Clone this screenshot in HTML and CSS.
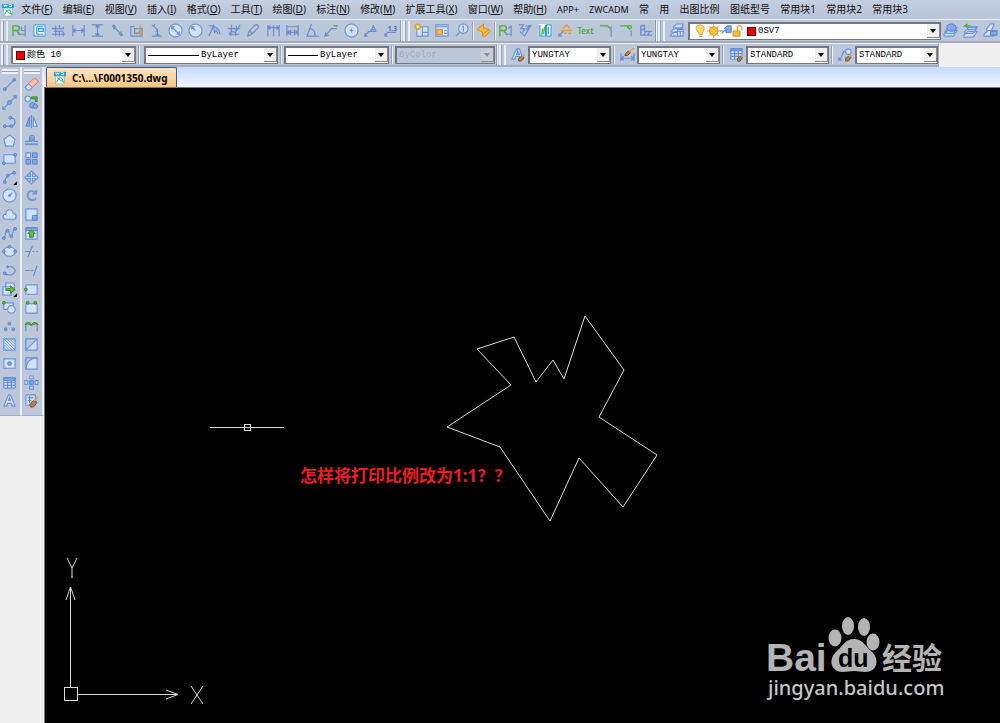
FILE: index.html
```html
<!DOCTYPE html>
<html lang="zh-CN">
<head>
<meta charset="utf-8">
<title>F0001350.dwg</title>
<link rel="stylesheet" href="styles.css">
</head>
<body>
<div class="app">
<nav class="menu" aria-label="主菜单">
<div class="items">
<svg class="logo" viewBox="0 0 16 16"><path class="paper" d="M3 5h10v9l-2 1H3z"/><path class="cyan" d="M1 1h14v5H1z"/><path class="whiteline" d="M3 2l1 2 1-2 1 2 1-2M9 2h3v2H9"/><path class="greenline" d="M4 13l3-5h3l2 5M5 8l7 5"/></svg>
<button>文件(<u>F</u>)</button><button>编辑(<u>E</u>)</button><button>视图(<u>V</u>)</button><button>插入(<u>I</u>)</button><button>格式(<u>O</u>)</button><button>工具(<u>T</u>)</button><button>绘图(<u>D</u>)</button><button>标注(<u>N</u>)</button><button>修改(<u>M</u>)</button><button>扩展工具(<u>X</u>)</button><button>窗口(<u>W</u>)</button><button>帮助(<u>H</u>)</button><button class="latin">APP+</button><button class="latin">ZWCADM</button><button>常</button><button>用</button><button>出图比例</button><button>图纸型号</button><button>常用块1</button><button>常用块2</button><button>常用块3</button>
</div>
</nav>

<div class="bar">
<i class="grip"></i>
<div class="tools dims">
<button aria-label="关联标注"><svg viewBox="0 0 16 16"><path class="g" d="M1 14V3h4c4 0 4 5 0 5H1M5 8l4 5"/><path class="s" d="M6 12h8V2M10 4v4h4M14 2v12"/></svg></button>
<button aria-label="布局"><svg viewBox="0 0 16 16"><path class="w" d="M1 1h14v14H1z"/><path class="c" d="M2 2h12v12H2zM5 4v8M5 4h7M7 6h5v3H7zM5 12h7"/></svg></button>
<button aria-label="快速标注"><svg viewBox="0 0 16 16"><path class="s" d="M1 6h13M5 3v6M3 9h10M9 2v5M13 4v3M1 12h14M5 9v5M9 9v5M13 9v5"/></svg></button>
<button aria-label="线性标注"><svg viewBox="0 0 16 16"><path class="s" d="M2 2v12M14 2v12M2 8h12M5 6L2 8l3 2M11 6l3 2-3 2"/></svg></button>
<button aria-label="竖直标注"><svg viewBox="0 0 16 16"><path class="s" d="M2 2h12M2 14h12M8 2v12M6 5l2-3 2 3M6 11l2 3 2-3"/></svg></button>
<button aria-label="对齐标注"><svg viewBox="0 0 16 16"><path class="s" d="M2 4l3-2M11 14l3-2M4 4l8 8M4 7V4h3M9 12h3V9"/></svg></button>
<button aria-label="坐标标注"><svg viewBox="0 0 16 16"><path class="s" d="M2 3v11h12V6H6v5h5V8M2 4h4"/><path class="o" d="M12 2v11M9 10h6"/></svg></button>
<button aria-label="折弯标注"><svg viewBox="0 0 16 16"><path class="s" d="M3 2l6 5-2 3M9 7v7M3 14h11M5 4l1-3M7 12l2 2 2-2"/></svg></button>
<button aria-label="直径"><svg viewBox="0 0 16 16"><circle class="f" cx="8" cy="8" r="7"/><path class="s" d="M4 4l8 8M4 7V4h3M9 12h3V9"/></svg></button>
<button aria-label="半径"><svg viewBox="0 0 16 16"><circle class="f" cx="8" cy="8" r="7"/><path class="s" d="M8 8L4 4M4 7V4h3"/></svg></button>
<button aria-label="折弯半径"><svg viewBox="0 0 16 16"><path class="s" d="M2 14L7 3l1 7 2-2 2 4M2 3c6-1 11 3 12 9"/></svg></button>
<button aria-label="弧长"><svg viewBox="0 0 16 16"><path class="s" d="M1 6h13M2 12h11M5 2L4 14M10 3l-1 11M2 12l3-3 4 1 5-8"/></svg></button>
<button aria-label="编辑标注"><svg viewBox="0 0 16 16"><path class="s" d="M2 14l1-5 7-7c2-1 4 1 3 3l-7 7zM3 9c2 0 3 1 3 3"/></svg></button>
<button aria-label="基线标注"><svg viewBox="0 0 16 16"><path class="s" d="M2 2v12M8 2v12M14 2v12M2 5h12M5 3L2 5l3 2M11 3l3 2-3 2"/></svg></button>
<button aria-label="连续标注"><svg viewBox="0 0 16 16"><path class="s" d="M2 2v12M14 2v12M2 4h12M2 10h12M6 7v6M10 7v6M5 12l-3-2 3-2M11 8l3 2-3 2"/></svg></button>
<button aria-label="角度标注"><svg viewBox="0 0 16 16"><path class="s" d="M7 1L2 14h13M5 6c4 0 6 4 6 8"/></svg></button>
<button aria-label="引线"><svg viewBox="0 0 16 16"><path class="s" d="M1 14l7-8h6M2 10l-1 4 4-1"/><path class="g" d="M10 3h5"/></svg></button>
<button aria-label="圆心标记"><svg viewBox="0 0 16 16"><circle class="f" cx="8" cy="8" r="7"/><path class="s" d="M8 6v4M6 8h4"/></svg></button>
<button aria-label="公差"><svg viewBox="0 0 16 16"><path class="s" d="M2 14l4-5h8M2 11v3h3M8 9l3-6 3 6M9 7h4"/></svg></button>
<button aria-label="标注文字"><svg viewBox="0 0 16 16"><path class="s" d="M2 14l3-4h9M2 11v3h3"/><text class="num" x="5" y="8">1.3</text></svg></button>
</div>
<i class="edge"></i><i class="grip"></i>
<div class="tools leaders">
<button aria-label="新建视图"><svg viewBox="0 0 16 16"><path class="f" d="M3 4h12v10H3zM9 4v10M9 10h6"/><circle class="amber" cx="4" cy="4" r="3"/><circle class="w" cx="4" cy="4" r="1"/></svg></button>
<button aria-label="视图管理"><svg viewBox="0 0 16 16"><path class="f" d="M2 2h13v12H2z"/><path class="s" d="M2 4h12M11 8h3M11 11h3"/><path class="amber" d="M3 7h6v5H3z"/></svg></button>
<button aria-label="查找"><svg viewBox="0 0 16 16"><circle class="f" cx="10" cy="6" r="5"/><path class="s" d="M6 10l-4 4M10 3v6M9 4l1-1"/></svg></button>
<i class="sep"></i>
<button aria-label="编辑"><svg viewBox="0 0 16 16"><path class="amber" d="M1 7l7-6v4l6 2-7 7v-4z"/><path class="amber" d="M7 13l6-6 2 2-6 6z"/></svg></button>
<i class="sep"></i>
<button aria-label="粗糙度"><svg viewBox="0 0 16 16"><path class="g" d="M2 14V3h4c4 0 4 5 0 5H2M6 8l4 5"/><path class="s" d="M8 12h6V3M11 6l3-3M14 3v11"/></svg></button>
<button aria-label="形位公差"><svg viewBox="0 0 16 16"><path class="s" d="M1 2h5L3 6h4l-2 4M2 9l5 5 7-12M8 3h4l-3 4h3"/></svg></button>
<button aria-label="对照"><svg viewBox="0 0 16 16"><path class="w" d="M1 1h14v14H1z"/><path class="c" d="M2 2v12h6V2M9 2h5v12H9zM11 4v8"/><path class="g" d="M4 13l1-7M6 12l1-8"/></svg></button>
<button aria-label="焊接符号"><svg viewBox="0 0 16 16"><path class="s" d="M1 14l5-6M1 11v3h3"/><path class="o" d="M3 8h12M5 6l4-4 4 4M7 11h2M11 11h3"/></svg></button>
<button class="texttool">Text</button>
<button aria-label="倒角"><svg viewBox="0 0 16 16"><path class="g" d="M2 3h8l4 4"/><path class="s" d="M14 3v12"/></svg></button>
<button aria-label="圆角"><svg viewBox="0 0 16 16"><path class="g" d="M2 3h7M9 3l4 4M10 3h4v3"/><path class="s" d="M14 8v6"/></svg></button>
<button aria-label="孔标注"><svg viewBox="0 0 16 16"><path class="s" d="M3 2v11h12M7 2v7h8M3 4l4-2M3 8l4-2M6 13l3-4M10 13l3-4"/></svg></button>
</div>
<i class="edge"></i><i class="grip"></i>
<div class="tools one"><button aria-label="图层管理"><svg viewBox="0 0 16 16"><path class="f" d="M1 12l5-3h8l-3 5H1zM2 8l4-3h8l-3 5H2zM4 4l3-3h7l-2 5H4z"/><path class="f" d="M8 7h6v7H8zM8 9h6M11 9v5"/></svg></button></div>
<label class="combo layer"><svg class="states" viewBox="0 0 54 16"><path class="bulb" d="M4 12V10C-2 4 2 1 5 1s8 3 3 9v2z"/><path class="s" d="M4 14h4"/><path class="ray" d="M21 0v16M13 8h16M15 2l12 12M15 14L27 2"/><circle class="amber" cx="21" cy="8" r="5"/><path class="deep" d="M33 5l4-3h4v8h-6V6z"/><path class="s" d="M28 8h7M30 11l4-4"/><path class="amber" d="M43 8h8v6h-8z"/><path class="o" d="M48 8V4c0-3 5-3 5 0v3"/></svg><i class="red"></i><select aria-label="图层"><option>0SV7</option></select><span class="arrow"></span></label>
<div class="tools last">
<button aria-label="图层置为当前"><svg viewBox="0 0 16 16"><path class="f" d="M1 12l4-4h10l-4 6H1zM2 9l4-4h9l-4 6H2z"/><ellipse class="deep" cx="9" cy="5" rx="5" ry="4"/></svg></button>
<button aria-label="上一个图层"><svg viewBox="0 0 16 16"><path class="f" d="M1 13l4-4h10l-4 6H1zM2 9l4-4h9l-4 6H2zM5 4h10l-2 3H5z"/><path class="g" d="M8 3H2l3-2M2 3l3 2"/></svg></button>
<button aria-label="图层状态"><svg viewBox="0 0 16 16"><path class="f" d="M1 12l4-4h10l-4 6H1zM4 6l4-5h4L9 8H4z"/><path class="deep" d="M8 9h7v4H8z"/></svg></button>
</div>
</div>

<div class="second">
<div class="bar props">
<i class="grip"></i>
<label class="combo color"><i class="red"></i><select aria-label="颜色"><option>颜色 10</option></select><span class="arrow"></span></label>
<i class="sep"></i>
<label class="combo ltype"><i class="line"></i><select aria-label="线型"><option>ByLayer</option></select><span class="arrow"></span></label>
<i class="sep"></i>
<label class="combo lweight"><i class="line"></i><select aria-label="线宽"><option>ByLayer</option></select><span class="arrow"></span></label>
<i class="sep"></i>
<label class="combo plot off"><select aria-label="打印样式" disabled><option>ByColor</option></select><span class="arrow"></span></label>
<i class="edge"></i><i class="grip"></i>
<button class="style" aria-label="文字样式"><svg viewBox="0 0 16 16"><path class="f" d="M1 13L6 2h3l4 11h-3L9 10H5l-1 3zM6 8h3L7 4z"/><path class="brush" d="M8 12l3-2 3 1-3 4H8z"/><path class="o" d="M12 11l2-3"/></svg></button>
<label class="combo std"><select aria-label="文字样式"><option>YUNGTAY</option></select><span class="arrow"></span></label>
<i class="sep"></i>
<button class="style" aria-label="标注样式"><svg viewBox="0 0 16 16"><path class="s" d="M1 7v8M15 7v8M1 12h14M4 10l-3 2 3 2M12 10l3 2-3 2"/><path class="brush" d="M6 7l3-3 2 2-3 3H5z"/><path class="o" d="M10 5l5-4"/></svg></button>
<label class="combo std"><select aria-label="标注样式"><option>YUNGTAY</option></select><span class="arrow"></span></label>
<i class="sep"></i>
<button class="style" aria-label="表格样式"><svg viewBox="0 0 16 16"><path class="f" d="M2 2h12v11H2z"/><path class="deep" d="M2 2h12v2H2z"/><path class="s" d="M2 7h12M2 10h12M6 4v9M10 4v9"/><path class="brush" d="M9 12l3-2 2 1-2 4H9z"/><path class="o" d="M13 11l2-3"/></svg></button>
<label class="combo std"><select aria-label="表格样式"><option>STANDARD</option></select><span class="arrow"></span></label>
<i class="sep"></i>
<button class="style" aria-label="引线样式"><svg viewBox="0 0 16 16"><path class="s" d="M1 14l2-2 3-7h3M1 11v3h3"/><circle class="f" cx="11" cy="5" r="3"/><path class="brush" d="M8 12l3-2 3 1-3 4H8z"/><path class="o" d="M12 11l2-3"/></svg></button>
<label class="combo std"><select aria-label="引线样式"><option>STANDARD</option></select><span class="arrow"></span></label>
</div>
</div>

<div class="work">
<aside class="rails">
<div class="rail">
<i class="hgrip"></i>
<button aria-label="直线"><svg viewBox="0 0 16 16"><path class="s" d="M3 13L13 3"/><circle class="deep" cx="3" cy="13" r="1.5"/><circle class="deep" cx="13" cy="3" r="1.5"/></svg></button>
<button aria-label="构造线"><svg viewBox="0 0 16 16"><path class="s" d="M1 15L15 1M1 12v3h3M12 1h3v3"/><circle class="deep" cx="8" cy="8" r="2"/></svg></button>
<button aria-label="多段线"><svg viewBox="0 0 16 16"><path class="s" d="M2 13h9c4-2 4-8-1-9"/><circle class="deep" cx="3" cy="13" r="1.5"/><circle class="deep" cx="10" cy="13" r="1.5"/><circle class="deep" cx="9" cy="4" r="1.5"/></svg></button>
<button aria-label="正多边形"><svg viewBox="0 0 16 16"><path class="f" d="M8 2l6 5-2 7H4L2 7z"/></svg></button>
<button aria-label="矩形"><svg viewBox="0 0 16 16"><path class="f" d="M2 4h12v9H2z"/><circle class="deep" cx="2" cy="13" r="1.5"/><circle class="deep" cx="14" cy="4" r="1.5"/></svg></button>
<button aria-label="圆弧"><svg viewBox="0 0 16 16"><path class="s" d="M3 13c0-5 4-9 10-10"/><circle class="deep" cx="3" cy="13" r="1.5"/><circle class="deep" cx="6" cy="6" r="1.5"/><circle class="deep" cx="13" cy="3" r="1.5"/><path class="corner" d="M16 12v4h-4z"/></svg></button>
<button aria-label="圆"><svg viewBox="0 0 16 16"><circle class="f" cx="8" cy="8" r="7"/><circle class="deep" cx="8" cy="8" r="1"/><path class="s" d="M8 8l3-3"/></svg></button>
<button aria-label="修订云线"><svg viewBox="0 0 16 16"><path class="f" d="M3 13c-4-2-1-6 1-5C4 2 11 1 12 7c4 0 4 6 0 6z"/></svg></button>
<button aria-label="样条曲线"><svg viewBox="0 0 16 16"><path class="s" d="M2 13c2 0 1-9 4-8s1 7 4 5 1-7 4-7"/><circle class="deep" cx="2" cy="13" r="1.5"/><circle class="deep" cx="6" cy="5" r="1.5"/><circle class="deep" cx="10" cy="11" r="1.5"/><circle class="deep" cx="14" cy="3" r="1.5"/></svg></button>
<button aria-label="椭圆"><svg viewBox="0 0 16 16"><ellipse class="f" cx="8" cy="8" rx="6" ry="5"/><circle class="deep" cx="8" cy="3" r="1.5"/><circle class="deep" cx="2" cy="8" r="1.5"/><circle class="deep" cx="14" cy="8" r="1.5"/></svg></button>
<button aria-label="椭圆弧"><svg viewBox="0 0 16 16"><path class="s" d="M3 11c4 4 11 1 11-3 0-3-4-5-8-4"/><circle class="deep" cx="3" cy="11" r="1.5"/><circle class="deep" cx="6" cy="4" r="1"/></svg></button>
<button aria-label="插入块"><svg viewBox="0 0 16 16"><path class="f" d="M4 1h9v8H4zM1 5h9v9H1z"/><path class="leaf" d="M5 7h4V4l5 4-5 4v-3H5z"/><path class="corner" d="M16 12v4h-4z"/></svg></button>
<button aria-label="创建块"><svg viewBox="0 0 16 16"><path class="f" d="M2 3h10v7H2z"/><circle class="f" cx="10" cy="10" r="4"/><circle class="leaf" cx="2" cy="3" r="1.5"/></svg></button>
<button aria-label="点"><svg viewBox="0 0 16 16"><circle class="deep" cx="8" cy="5" r="1.5"/><circle class="deep" cx="4" cy="11" r="1.5"/><circle class="deep" cx="12" cy="11" r="1.5"/></svg></button>
<button aria-label="图案填充"><svg viewBox="0 0 16 16"><path class="f" d="M2 2h12v12H2z"/><path class="hatch" d="M2 2l12 12M2 5l9 9M2 8l6 6M5 2l9 9M8 2l6 6M2 11l3 3M11 2l3 3"/></svg></button>
<button aria-label="面域"><svg viewBox="0 0 16 16"><path class="f" d="M2 3h12v10H2z"/><circle class="deep" cx="8" cy="8" r="2"/></svg></button>
<button aria-label="表格"><svg viewBox="0 0 16 16"><path class="f" d="M2 3h12v11H2z"/><path class="deep" d="M2 3h12v3H2z"/><path class="s" d="M2 8h12M2 11h12M6 6v8M10 6v8"/></svg></button>
<button aria-label="多行文字"><svg viewBox="0 0 16 16"><path class="f" d="M2 14L7 2h2l5 12h-3l-1-3H6l-1 3zM7 8h2L8 5z"/></svg></button>
</div>
<div class="rail">
<i class="hgrip"></i>
<button aria-label="删除"><svg viewBox="0 0 16 16"><path class="f" d="M1 11l4-4 4 4-3 3H4z"/><path class="eraser" d="M5 7l5-5h3l2 3-6 6z"/></svg></button>
<button aria-label="复制"><svg viewBox="0 0 16 16"><circle class="f" cx="4" cy="4" r="3"/><circle class="deep" cx="9" cy="11" r="3"/><circle class="deep" cx="12" cy="12" r="2.5"/><path class="leaf" d="M8 2h6v5h-2V4H8z"/></svg></button>
<button aria-label="镜像"><svg viewBox="0 0 16 16"><path class="deep" d="M6 3v10H2z"/><path class="f" d="M10 3v10h4z"/><path class="s" d="M8 1v14"/></svg></button>
<button aria-label="偏移"><svg viewBox="0 0 16 16"><path class="thick" d="M1 12h14"/><path class="s" d="M1 9h5V5c0-3 5-3 5 0v4h4"/><circle class="deep" cx="8" cy="7" r="2"/></svg></button>
<button aria-label="阵列"><svg viewBox="0 0 16 16"><path class="f" d="M2 2h5v5H2z"/><path class="deep" d="M9 2h5v5H9zM2 9h5v5H2zM9 9h5v5H9z"/></svg></button>
<button aria-label="移动"><svg viewBox="0 0 16 16"><path class="f" d="M8 1l3 3H9v3h3V5l3 3-3 3V9H9v3h2l-3 3-3-3h2V9H4v2L1 8l3-3v2h3V4H5z"/></svg></button>
<button aria-label="旋转"><svg viewBox="0 0 16 16"><path class="thick" d="M12 5c-4-4-9-1-8 4 1 4 6 5 9 2M13 2v4H9"/></svg></button>
<button aria-label="缩放"><svg viewBox="0 0 16 16"><path class="f" d="M2 2h12v12H2z"/><path class="deep" d="M9 9h5v5H9z"/></svg></button>
<button aria-label="拉伸"><svg viewBox="0 0 16 16"><path class="f" d="M2 2h12v12H2z"/><path class="deep" d="M2 2h12v3H2z"/><path class="leaf" d="M8 4l4 4h-2v4H6V8H4z"/></svg></button>
<button aria-label="修剪"><svg viewBox="0 0 16 16"><path class="s" d="M1 8h5M9 8h2M13 8h2M4 14L9 2"/></svg></button>
<button aria-label="延伸"><svg viewBox="0 0 16 16"><path class="s" d="M1 8h5M7 8h3M10 14l4-11"/></svg></button>
<button aria-label="打断于点"><svg viewBox="0 0 16 16"><path class="f" d="M2 3h12v10H2z"/><circle class="leaf" cx="2" cy="8" r="1.5"/></svg></button>
<button aria-label="打断"><svg viewBox="0 0 16 16"><path class="f" d="M2 4h12v10H2z"/><circle class="leaf" cx="4" cy="3" r="1.5"/><circle class="leaf" cx="12" cy="3" r="1.5"/></svg></button>
<button aria-label="合并"><svg viewBox="0 0 16 16"><path class="s" d="M2 6v7M14 6v7"/><path class="leaf" d="M1 6c2-3 5-3 7 0 2-3 5-3 7 0-2-1-4-1-7 1-3-2-5-2-7-1z"/></svg></button>
<button aria-label="倒角"><svg viewBox="0 0 16 16"><path class="f" d="M2 14L14 2v12z"/><path class="s" d="M2 14V2h12"/></svg></button>
<button aria-label="圆角"><svg viewBox="0 0 16 16"><path class="f" d="M2 14C2 7 7 2 14 2v12z"/><path class="s" d="M2 14V2h12"/></svg></button>
<button aria-label="分解"><svg viewBox="0 0 16 16"><path class="f" d="M6 1h4v3H6zM1 6h3v4H1zM12 6h3v4h-3zM6 12h4v3H6z"/><path class="deep" d="M6 6h4v4H6z"/></svg></button>
<button aria-label="特性匹配"><svg viewBox="0 0 16 16"><path class="f" d="M2 2h10v11H2z"/><path class="s" d="M4 5h6M4 8h4M6 3v8"/><path class="brush" d="M6 12l4-4 4 2-4 5H7z"/><path class="o" d="M12 8l3-5"/></svg></button>
</div>
</aside>
<main class="doc">
<div class="tabs"><button class="tab"><svg class="logo" viewBox="0 0 16 16"><path class="paper" d="M3 5h10v9l-2 1H3z"/><path class="cyan" d="M1 1h14v5H1z"/><path class="whiteline" d="M3 2l1 2 1-2 1 2 1-2M9 2h3v2H9"/><path class="greenline" d="M4 13l3-5h3l2 5M5 8l7 5"/></svg><span>C:\...\F0001350.dwg</span></button></div>
<div class="canvas">
<svg class="shape" width="620" height="450" viewBox="45 88 620 450"><path class="ink" d="M585 316L624 370 599 417 657 455 623 507 579 458 550 521 500 447 447 427 511 385 477 349 514 337 536 382 553 360 564 379z"/><path class="ink crisp" d="M209.500 427.500H283.500M244.500 424.500h6v6h-6z"/></svg>
<p class="note">怎样将打印比例改为1:1<span class="ask">？？</span></p>
<svg class="ucs" width="170" height="175" viewBox="45 548 170 175"><path class="ink crisp" d="M64.500 687.500h13v13h-13zM70.500 687V588M78 694.500h100"/><path class="ink" d="M66 600l4.500-13 4.500 13M166 690l12 4.500-12 4.500M67 558l5 10 5-10M72 568v10M191 686l12 18M203 686l-12 18"/></svg>
<svg class="mark" width="190" height="95" viewBox="760 612 190 95" role="img" aria-label="百度经验"><text class="bai" x="766" y="671">Bai</text><ellipse cx="835" cy="638" rx="6.500" ry="8.500"/><ellipse cx="848" cy="626" rx="6" ry="9"/><ellipse cx="864" cy="627" rx="6" ry="9"/><ellipse cx="873" cy="642" rx="6.500" ry="8.500"/><path d="M854 639c9 0 11 7 17 12 9 7 7 21-6 21-4 0-7-1-11-1s-7 1-11 1c-13 0-15-14-6-21 6-5 8-12 17-12z"/><text class="du" x="838" y="667">du</text><text class="jy" x="882" y="669">经验</text><text class="url" x="768" y="695">jingyan.baidu.com</text></svg>
</div>
</main>
</div>
</div>
</body>
</html>
```
FILE: styles.css
```css
* { box-sizing: border-box; }
body {
  margin: 0;
  background: #f0f0f0;
  font-family: "Noto Sans", "Noto Sans CJK SC", sans-serif;
  font-size: 10px;
  color: #111;
}
button { border: 0; padding: 0; margin: 0; background: none; font: inherit; color: inherit; }
.app { display: flex; flex-direction: column; height: 100vh; overflow: hidden; }

/* menu */
.menu {
  height: 19px;
  background: linear-gradient(#c4cfe0, #b7c3d7);
  white-space: nowrap;
}
.items { display: flex; align-items: center; justify-content: space-between; width: 913px; }
.items button { padding: 0 5px; min-width: 20px; line-height: 19px; }
.items .latin { font-size: 9px; }
.logo { width: 14px; height: 14px; margin: 0 1px; flex: none; }

/* toolbars */
.bar {
  display: flex;
  align-items: center;
  height: 24px;
  background: #bcc7d9;
  border-top: 1px solid #eceff5;
  border-bottom: 2px solid #a4acbc;
}
.grip {
  flex: none;
  width: 7px;
  height: 20px;
  margin: 0 2px 0 1px;
  border: solid #e9edf4;
  border-width: 0 2px;
  background: linear-gradient(90deg, #97a1b3 1px, #bcc7d9 1px);
}
.sep { flex: none; width: 2px; height: 18px; background: #97a1b3; border-right: 1px solid #edf0f6; }
.edge { flex: none; width: 2px; height: 21px; background: #8e98aa; border-right: 1px solid #edf0f6; }
.tools { display: flex; align-items: center; }
.tools button { flex: 1; display: flex; justify-content: center; }
.dims { width: 390px; }
.leaders { width: 243px; }
.one { width: 21px; }
.last { flex: 1; }
svg { display: block; flex: none; }
.tools svg, .style svg, .rail svg { width: 15px; height: 15px; }
.tools .texttool { color: #38ac2c; font-size: 8px; font-weight: 500; }

.second { display: flex; height: 24px; }
.props { flex: none; border-right: 1px solid #a4acbc; }
.style { width: 20px; display: flex; justify-content: center; flex: none; }

/* drop-downs */
.combo {
  display: flex;
  align-items: center;
  height: 18px;
  flex: none;
  background: #fff;
  border: solid #73777f;
  border-width: 2px 1px 1px 2px;
  font-family: "Liberation Mono", "Noto Sans CJK SC", monospace;
  font-size: 9px;
}
.combo select {
  appearance: none;
  flex: 1;
  min-width: 0;
  height: 14px;
  padding: 0 0 0 2px;
  border: 0;
  background: none;
  color: #000;
  opacity: 1;
  font: inherit;
}
.arrow {
  flex: none;
  display: flex;
  align-items: center;
  justify-content: center;
  width: 13px;
  height: 14px;
  background: #f0efed;
  border: solid #8a8a8a;
  border-width: 0 1px 1px 0;
}
.arrow::after { content: ""; border: 3px solid transparent; border-top: 4px solid #000; border-bottom: 0; }
.red { flex: none; width: 9px; height: 9px; background: #f00000; border: 1px solid #600; }
.layer { width: 253px; }
.layer .red { margin-left: 1px; }
.states { width: 54px; height: 14px; margin-left: 2px; }
.color { width: 125px; margin-left: 1px; }
.color .red { margin-left: 3px; }
.color + .sep, .ltype + .sep { margin: 0 2px; }
.ltype { width: 134px; margin-left: 2px; }
.line { flex: none; height: 1px; background: #000; margin-left: 2px; width: 51px; }
.lweight .line { width: 30px; }
.lweight { width: 105px; }
.lweight + .sep { margin: 0 2px; }
.plot { width: 100px; margin-right: 1px; }
.off { background: #bcc7d9; }
.off select { color: #a2aab8; }
.off .arrow { background: #c8cfdb; }
.off .arrow::after { border-top-color: #8e949e; }
.std { width: 83px; }
.std + .sep { margin: 0 2px; }

/* workspace */
.work { display: flex; flex: 1; min-height: 0; }
.rails { display: flex; align-items: flex-start; width: 44px; flex: none; }
.rail {
  display: flex;
  flex-direction: column;
  width: 22px;
  height: 349px;
  padding: 2px 2px 5px 0;
  background: #bcc7d9;
  border-right: 2px solid #eceff5;
  border-bottom: 1px solid #a4acbc;
}
.hgrip { flex: none; height: 5px; margin: 0 0 1px 2px; border: solid #eceff5; border-width: 2px 0; background: #97a1b3; }
.rail button { flex: 1; display: flex; align-items: center; justify-content: center; }
.doc { flex: 1; display: flex; flex-direction: column; min-width: 0; }
.tabs { height: 21px; padding: 0 2px; background: linear-gradient(#c3daf8, #f1f6fe); border-bottom: 1px solid #777; display: flex; }
.tab {
  display: flex;
  align-items: center;
  gap: 4px;
  padding: 0 8px 0 5px;
  background: linear-gradient(#ffe6c5, #ffc47c);
  border: 1px solid #40598d;
  border-bottom: 0;
  border-radius: 2px 2px 0 0;
  color: #000;
  font-weight: 700;
}
.canvas { position: relative; flex: 1; background: #000; border-left: 1px solid #777; overflow: hidden; }
.shape { position: absolute; left: 0; top: 0; }
.ucs { position: absolute; left: 0; bottom: 0; }
.mark { position: absolute; right: 50px; bottom: 16px; fill: #b4b4b4; }
.note {
  position: absolute;
  left: 255px;
  top: 375px;
  margin: 0;
  line-height: 24px;
  font-size: 17px;
  font-weight: 700;
  color: #ed1c24;
  white-space: nowrap;
}
.ask { font-family: "Noto Sans CJK TC", sans-serif; }
.ink { fill: none; stroke: #dcdcdc; stroke-width: 1; }
.crisp { shape-rendering: crispEdges; }
.bai { font: 700 39px "Liberation Sans", sans-serif; }
.du { font: 700 25px "Liberation Sans", sans-serif; fill: #000; }
.jy { font: 700 30px "Noto Sans CJK SC", sans-serif; }
.url { font: 500 20px "Noto Sans", sans-serif; fill: #c6c6c6; }

/* icon paint */
.s { fill: none; stroke: #6a8fd2; stroke-width: 1.3; }
.g { fill: none; stroke: #50b030; stroke-width: 1.4; }
.c { fill: none; stroke: #359be0; stroke-width: 1.3; }
.o { fill: none; stroke: #ec9b2c; stroke-width: 1.5; }
.f { fill: #d0e2fd; stroke: #6b93d8; stroke-width: 1.2; }
.w { fill: #fff; }
.deep { fill: #7fa8ee; stroke: #5680c6; stroke-width: 1; }
.hatch { fill: none; stroke: #7599d8; stroke-width: 1; }
.amber { fill: #ffbc3c; stroke: #d98a1e; stroke-width: 1; }
.bulb { fill: #ffd968; stroke: #e29a28; }
.ray { stroke: #e39124; stroke-width: 1; }
.leaf { fill: #63bd31; stroke: #338a1e; stroke-width: 1; }
.brush { fill: #b88347; stroke: #765237; stroke-width: 1; }
.eraser { fill: #ffc0ad; stroke: #dc755e; }
.thick { fill: none; stroke: #7297d5; stroke-width: 2; }
.corner { fill: #000; }
.num { fill: #4377c9; font: 700 7px "Noto Sans", sans-serif; }
.paper { fill: #f5fafc; stroke: #8db6bf; }
.cyan { fill: #20a5d2; }
.whiteline { fill: none; stroke: #fff; }
.greenline { fill: none; stroke: #27a46b; }
```
